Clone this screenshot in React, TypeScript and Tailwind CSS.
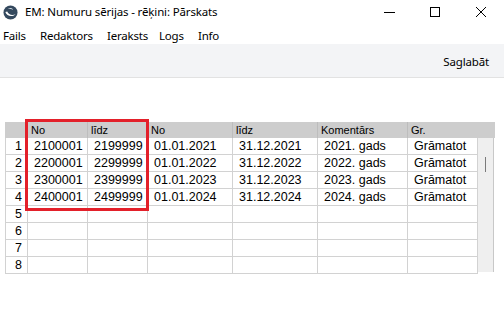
import React from "react";

const cols = ["No", "līdz", "No", "līdz", "Komentārs", "Gr."];

const rows = [
  ["2100001", "2199999", "01.01.2021", "31.12.2021", "2021. gads", "Grāmatot"],
  ["2200001", "2299999", "01.01.2022", "31.12.2022", "2022. gads", "Grāmatot"],
  ["2300001", "2399999", "01.01.2023", "31.12.2023", "2023. gads", "Grāmatot"],
  ["2400001", "2499999", "01.01.2024", "31.12.2024", "2024. gads", "Grāmatot"],
  ["", "", "", "", "", ""],
  ["", "", "", "", "", ""],
  ["", "", "", "", "", ""],
  ["", "", "", "", "", ""],
];

const widths = ["w-[60px]", "w-[60px]", "w-[85px]", "w-[85px]", "w-[90px]", "w-[70px]"];

const menu = [
  { label: "Fails", w: "w-[37px]" },
  { label: "Redaktors", w: "w-[67px]" },
  { label: "Ieraksts", w: "w-[52px]" },
  { label: "Logs", w: "w-[39px]" },
  { label: "Info", w: "w-[30px]" },
];

const AppIcon = () => (
  <svg width="15" height="15" viewBox="0 0 16 16">
    <circle cx="8" cy="8" r="7.5" fill="#34495e" />
    <path d="M2.5 7.5 C4 12 10 13.5 13.5 9.5 C11 11.5 6 11 4.5 7 Z" fill="#ffffff" />
    <path d="M5 4 C7 2.5 10 3 11 5 C9 4 7 4.2 5 4 Z" fill="#cfd8e0" />
  </svg>
);

const App = () => {
  return (
    <div className="w-[504px] h-[318px] bg-white overflow-hidden text-black font-['Noto_Sans',sans-serif]">
      {/* title bar */}
      <div className="h-[24px] flex items-center">
        <div className="pl-[3px] pr-[7px] flex items-center">
          <AppIcon />
        </div>
        <span className="text-[11.5px] tracking-[-0.15px] leading-none">
          EM: Numuru sērijas - rēķini: Pārskats
        </span>
        <div className="ml-auto flex items-center h-full">
          <div className="w-[46px] h-full flex items-center justify-center">
            <div className="w-[11px] h-px bg-black" />
          </div>
          <div className="w-[46px] h-full flex items-center justify-center">
            <div className="w-[10px] h-[10px] border border-black" />
          </div>
          <div className="w-[46px] h-full flex items-center justify-center">
            <svg width="12" height="12" viewBox="0 0 12 12">
              <path d="M1 1 L11 11 M11 1 L1 11" stroke="#000" strokeWidth="1" />
            </svg>
          </div>
        </div>
      </div>

      {/* menu bar */}
      <div className="h-[20px] pt-[3px] flex items-center text-[11.5px] tracking-[-0.2px] pl-[3px]">
        {menu.map((m) => (
          <span key={m.label} className={`${m.w} whitespace-nowrap`}>
            {m.label}
          </span>
        ))}
      </div>

      {/* toolbar */}
      <div className="h-[34px] pt-[2px] bg-[#f3f4f6] border-b border-[#e2e2e2] flex items-center justify-end pr-[15px]">
        <span className="text-[11.5px] tracking-[-0.15px]">Saglabāt</span>
      </div>

      {/* table */}
      <div className="relative mt-[44px] ml-[5px] w-[490px] font-['Liberation_Sans',Arial,sans-serif]">
        <div className="flex h-[16px] bg-[#cdcdcd] text-[11px] leading-[16px]">
          <div className="w-[23px]" />
          {cols.map((c, i) => (
            <div key={i} className={`${widths[i]} pl-[3px] border-r border-[#bdbdbd] last:border-r-0`}>
              {c}
            </div>
          ))}
        </div>
        <div className="flex">
          <div>
            {rows.map((r, ri) => (
              <div key={ri} className="flex h-[17px] text-[12.5px] leading-[16px]">
                <div className="w-[23px] border-l border-r border-b border-[#d2d2d2] text-right pr-[5px]">
                  {ri + 1}
                </div>
                {r.map((v, ci) => (
                  <div key={ci} className={`${widths[ci]} border-r border-b border-[#d2d2d2] pl-[6px]`}>
                    {v}
                  </div>
                ))}
              </div>
            ))}
          </div>
          <div className="w-[16px] h-[134px] bg-[#efefef] border-r border-[#c8c8c8] relative">
            <div className="absolute left-[7px] top-[19px] w-px h-[15px] bg-[#7a7a7a]" />
          </div>
        </div>
        <div className="absolute left-[20px] top-[-3px] w-[124px] h-[92px] border-[3px] border-[#e3202a] pointer-events-none" />
      </div>
    </div>
  );
};

export default App;
